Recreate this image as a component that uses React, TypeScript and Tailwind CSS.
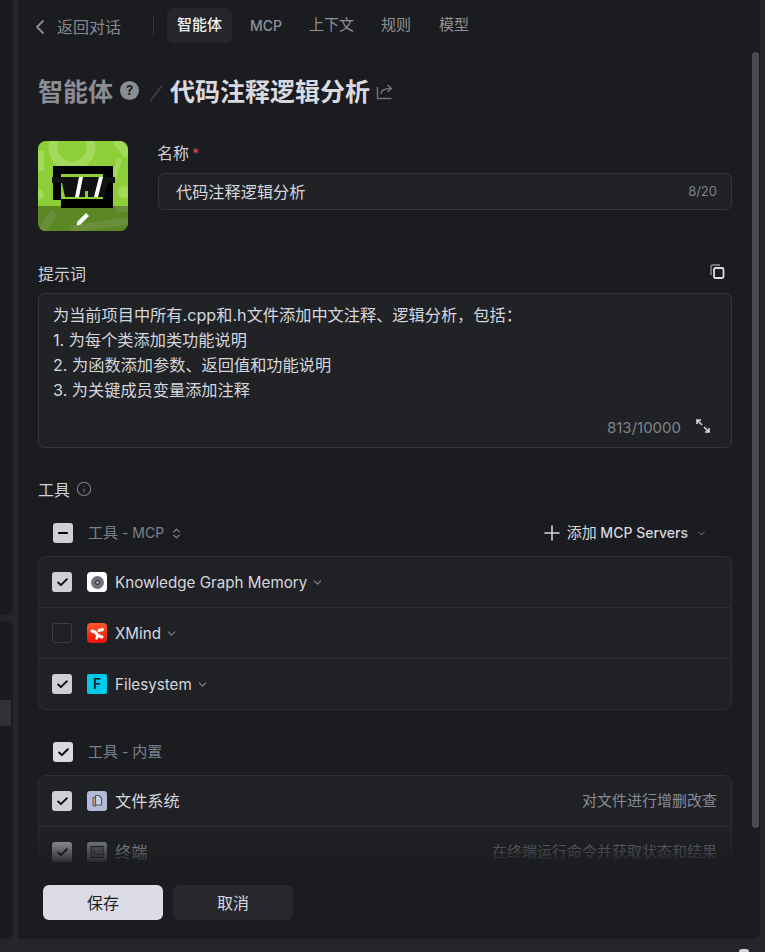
import { ChevronLeft, ChevronDown, ChevronsUpDown, Check, Minus, Plus, Info } from 'lucide-react';

const font = { fontFamily: 'Inter, "Noto Sans CJK SC", sans-serif' };

function Avatar() {
  return (
    <div className="relative w-[90px] h-[90px] rounded-lg overflow-hidden shrink-0 bg-[#8ccf38]">
      <svg width="90" height="90" viewBox="0 0 90 90" className="block">
        <circle cx="34" cy="6" r="19" fill="none" stroke="#a3da5c" strokeWidth="9" />
        <path d="M78 0 L90 14" stroke="#a3da5c" strokeWidth="8" />
        <path d="M3 10 L3 30" stroke="#a3da5c" strokeWidth="6" />
        <circle cx="1" cy="53" r="5" fill="#a3da5c" />
        <circle cx="86" cy="51" r="6" fill="#a3da5c" />
        <path d="M81 20 L76 36" stroke="#a3da5c" strokeWidth="5" strokeLinecap="round" />
        <path d="M6 88 L14 74" stroke="#a3da5c" strokeWidth="8" strokeLinecap="round" />
        <path d="M33 88 L90 80" stroke="#a3da5c" strokeWidth="7" />
        <path d="M78 65 H90 V71 H78 Z" fill="#a3da5c" />
        <path d="M15 25 H75 V67 H23 V59 H15 Z" fill="#000" />
        <path d="M23 33 H65 V58 H23 Z" fill="#8ccf38" />
        <path d="M14 36 H77 V42 H70 L66 56 H27 L24 42 H14 Z" fill="#111" />
        <path d="M41 36 H45 L41 56 H37 Z" fill="#fff" />
        <path d="M61 36 H65 L60 56 H56 Z" fill="#fff" />
        <path d="M47 56 V50 H50 V56 Z" fill="#8ccf38" />
      </svg>
      <div className="absolute left-0 right-0 bottom-0 h-[25px] bg-black/35 flex items-center justify-center">
        <svg width="14" height="14" viewBox="0 0 14 14">
          <path d="M0.500 13.500 L1.500 9.500 L10 1 L13 4 L4.500 12.500 Z" fill="#fff" />
        </svg>
      </div>
    </div>
  );
}

function Box({ on }: { on?: boolean }) {
  if (!on) return <span className="w-5 h-5 rounded-[3px] border border-[#3c3d42] shrink-0" />;
  return (
    <span className="w-5 h-5 rounded-[3px] flex items-center justify-center shrink-0 bg-[#cfd0d6]">
      <Check className="w-[13px] h-[13px] text-[#0d0d0f]" strokeWidth={3.4} />
    </span>
  );
}

function Row({ on, icon, name, desc, arrow, top, cjk }: { on?: boolean; icon: React.ReactNode; name: string; desc?: string; arrow?: boolean; top?: boolean; cjk?: boolean }) {
  return (
    <div className={`pl-[13px] pr-[14px] flex items-center ${top ? 'h-[51px] border-t border-[#2e2f34]' : 'h-[50px]'}`}>
      <Box on={on} />
      <span className="ml-[15px] w-5 h-5 shrink-0">{icon}</span>
      <span className={`ml-2 text-[#d5d7de] ${cjk ? 'text-[16.2px]' : 'text-[15.2px] pt-[2px]'}`}>{name}</span>
      {arrow && <ChevronDown className="ml-[4px] w-[13px] h-[13px] text-[#83858c]" strokeWidth={2} />}
      {desc && <span className="ml-auto text-[15px] text-[#878b96]">{desc}</span>}
    </div>
  );
}

export default function App() {
  return (
    <div className="relative w-[765px] h-[952px] overflow-hidden flex bg-[#25262a]" style={font}>
      {/* sliver of the side panel */}
      <div className="w-[13px] h-[939px] flex flex-col gap-[6px] shrink-0">
        <div className="h-[615px] bg-[#1a1b1e] rounded-br-lg" />
        <div className="h-[318px] bg-[#1a1b1e] rounded-r-lg pt-[79px]">
          <div className="h-[26px] w-[11px] bg-[#303136]" />
        </div>
      </div>

      <div className="relative ml-[5px] w-[742px] h-[939px] bg-[#1b1c1f] rounded-br-lg overflow-hidden flex flex-col">
        {/* tabs */}
        <div className="h-[51px] flex items-center shrink-0">
          <ChevronLeft className="ml-[10px] w-[24px] h-[24px] text-[#8d8f97] mt-[3px]" strokeWidth={1.8} />
          <span className="ml-[5px] text-[16px] text-[#858790] mt-[3px]">返回对话</span>
          <span className="ml-[32px] h-[20px] w-px bg-[#33343a]" />
          <div className="ml-[13px] flex items-center text-[15px] text-[#8f919a]">
            <span className="h-[35px] px-[10px] flex items-center rounded-md bg-[#25262a] text-[#eff0f3] font-medium">智能体</span>
            <span className="ml-[18px] text-[14px] font-medium">MCP</span>
            <span className="ml-[27px]">上下文</span>
            <span className="ml-[27px]">规则</span>
            <span className="ml-[28px]">模型</span>
          </div>
        </div>

        {/* title */}
        <div className="mt-[24px] ml-[20px] h-[36px] flex items-center shrink-0">
          <span className="text-[25px] font-bold text-[#8b8d96]">智能体</span>
          <span className="ml-[7px] -mt-[6px] w-[19px] h-[19px] rounded-full bg-[#8b8d96] flex items-center justify-center text-[13px] font-bold leading-none text-[#1b1c1f]">?</span>
          <span className="ml-[16px] w-[2px] h-[19px] rotate-[37deg] bg-[#3a3b40]" />
          <span className="ml-[13px] text-[25px] font-bold text-[#d9dae0]">代码注释逻辑分析</span>
          <svg width="18" height="16" viewBox="0 0 18 16" fill="none" stroke="#70727b" strokeWidth="1.5" className="ml-[6px] -mt-[2px]">
            <path d="M1.5 3v11.5h14" />
            <path d="M5 10c0-4 3-5.500 10-5.500M11.500 1l4 3.500-4 3.500" />
          </svg>
        </div>

        {/* name */}
        <div className="mt-[30px] ml-[20px] flex shrink-0">
          <Avatar />
          <div className="ml-[30px] w-[574px]">
            <div className="h-[24px] -ml-[1px] flex items-center text-[16px] text-[#cfd1d8]">
              名称<span className="ml-[3px] text-[#e5484d] text-[14px]">*</span>
            </div>
            <div className="mt-[8px] h-[37px] rounded-md border border-[#35363b] bg-[#212226] flex items-center pl-[17px] pr-[14px]">
              <span className="text-[16.2px] text-[#d5d7de] pt-[2px]">代码注释逻辑分析</span>
              <span className="ml-auto text-[13px] text-[#7c808b]">8/20</span>
            </div>
          </div>
        </div>

        {/* prompt */}
        <div className="mt-[31px] ml-[20px] mr-[28px] h-[24px] flex items-center justify-between shrink-0">
          <span className="text-[16px] text-[#cfd1d8]">提示词</span>
          <svg width="15" height="15" viewBox="0 0 15 15" fill="none" className="mr-[7px] -mt-[5px]">
            <path d="M1 11V2.500A1.500 1.500 0 0 1 2.500 1H10" stroke="#8b8d96" strokeWidth="1.4" />
            <rect x="4" y="4" width="9.500" height="10" rx="1.500" stroke="#dcdde3" strokeWidth="1.800" />
          </svg>
        </div>
        <div className="mt-[7px] ml-[20px] mr-[28px] h-[155px] rounded-md border border-[#35363b] bg-[#212226] pl-[14px] pr-[14px] pt-[9px] flex flex-col shrink-0">
          <div className="text-[16.2px] leading-[25px] text-[#d5d7de]">
            <p>为当前项目中所有.cpp和.h文件添加中文注释、逻辑分析，包括：</p>
            <p>1. 为每个类添加类功能说明</p>
            <p>2. 为函数添加参数、返回值和功能说明</p>
            <p>3. 为关键成员变量添加注释</p>
          </div>
          <div className="mt-auto mb-[8px] flex items-center justify-end">
            <span className="text-[15px] text-[#7f828c]">813/10000</span>
            <svg width="16" height="16" viewBox="0 0 16 16" fill="none" stroke="#d5d7de" strokeWidth="1.6" className="ml-[14px] mr-[6px] -mt-[4px]">
              <path d="M2 6V2h4M2 2l5 5M14 10v4h-4M14 14L9 9" />
            </svg>
          </div>
        </div>

        {/* tools */}
        <div className="mt-[30px] ml-[20px] h-[24px] flex items-center shrink-0">
          <span className="text-[16px] text-[#cfd1d8]">工具</span>
          <Info className="ml-[6px] -mt-[3px] w-[16px] h-[16px] text-[#7c7e87]" strokeWidth={1.6} />
        </div>

        <div className="mt-[13px] ml-[35px] mr-[53px] h-[36px] flex items-center shrink-0">
          <span className="w-5 h-5 rounded-[3px] bg-[#cfd0d6] flex items-center justify-center">
            <Minus className="w-[14px] h-[14px] text-black" strokeWidth={3.4} />
          </span>
          <span className="ml-[15px] text-[14px] text-[#7e818b]"><span className="text-[15px]">工具</span> - MCP</span>
          <ChevronsUpDown className="ml-[6px] w-[13px] h-[13px] text-[#8a8c94]" strokeWidth={2} />
          <Plus className="ml-auto w-[24px] h-[24px] text-[#d5d7de]" strokeWidth={1.6} />
          <span className="ml-[3px] text-[14px] font-medium text-[#d5d7de]"><span className="text-[15px] font-normal">添加</span> MCP Servers</span>
          <ChevronDown className="ml-[8px] w-[11px] h-[11px] text-[#83858c]" strokeWidth={2} />
        </div>

        <div className="mt-[5px] ml-[20px] mr-[28px] rounded-lg border border-[#2e2f34] bg-[#202125] shrink-0">
          <Row on name="Knowledge Graph Memory" arrow icon={
            <span className="w-5 h-5 rounded-[4px] bg-white flex items-center justify-center">
              <span className="w-[13px] h-[13px] rounded-full bg-[#70737d] flex items-center justify-center">
                <span className="w-[5px] h-[5px] rounded-full bg-[#a0a3ad] border border-[#23252c]" />
              </span>
            </span>
          } />
          <Row top name="XMind" arrow icon={
            <svg width="20" height="20" viewBox="0 0 20 20">
              <defs>
                <linearGradient id="xm" x1="0" y1="0" x2="0" y2="1">
                  <stop offset="0" stopColor="#fb5a2b" />
                  <stop offset="1" stopColor="#f00f0a" />
                </linearGradient>
              </defs>
              <rect width="20" height="20" rx="4" fill="url(#xm)" />
              <path d="M5 8 L8 9 L11 12.500 L15 14" stroke="#fff" strokeWidth="3" fill="none" strokeLinecap="round" />
              <path d="M15.500 6.500 L12 7.500" stroke="#fff" strokeWidth="3" fill="none" strokeLinecap="round" />
              <path d="M9.500 15.500 L10.500 13" stroke="#fff" strokeWidth="2.500" fill="none" strokeLinecap="round" />
            </svg>
          } />
          <Row top on name="Filesystem" arrow icon={
            <span className="w-5 h-5 rounded-[2px] bg-[#00cbe8] flex items-center justify-center text-[14px] font-semibold leading-none text-[#14222c]">F</span>
          } />
        </div>

        <div className="mt-[24px] ml-[35px] h-[36px] flex items-center shrink-0">
          <span className="w-5 h-5 rounded-[3px] bg-[#d9dae0] flex items-center justify-center">
            <Check className="w-[13px] h-[13px] text-black" strokeWidth={3.4} />
          </span>
          <span className="ml-[15px] text-[14px] text-[#7e818b]"><span className="text-[15px]">工具</span> - <span className="text-[15px]">内置</span></span>
        </div>

        <div className="mt-[5px] ml-[20px] mr-[28px] rounded-t-lg border border-[#2e2f34] bg-[#202125] shrink-0">
          <Row on cjk name="文件系统" desc="对文件进行增删改查" icon={
            <svg width="20" height="20" viewBox="0 0 20 20">
              <rect width="20" height="20" rx="3" fill="#b1bbd7" />
              <path d="M6 6.500H9V15H6Z" fill="#d8a35a" stroke="#4e5a78" strokeWidth="1" />
              <path d="M8.500 4.500H12L14.500 7V14H8.500Z" fill="#c9d0e2" stroke="#4e5a78" strokeWidth="1.200" />
            </svg>
          } />
          <Row top on cjk name="终端" desc="在终端运行命令并获取状态和结果" icon={
            <svg width="20" height="20" viewBox="0 0 20 20" fill="none">
              <rect width="20" height="20" rx="3" fill="#a8abb6" />
              <rect x="4" y="4.500" width="12" height="11" fill="#7d808c" stroke="#22242b" strokeWidth="1" />
              <path d="M6 8l2 2-2 2M9.500 12.500H13" stroke="#22242b" strokeWidth="1" />
            </svg>
          } />
        </div>

        {/* overlays */}
        <div className="absolute left-0 right-0 top-[826px] h-[40px] bg-gradient-to-b from-transparent to-[#1b1c1f]" />
        <div className="absolute left-0 right-0 top-[866px] bottom-0 bg-[#1b1c1f] pl-[25px] pt-[19px] flex gap-[10px]">
          <button className="w-[120px] h-[35px] rounded-md bg-[#dbdce5] text-[16px] pt-[1px] text-[#1b1c1f]">保存</button>
          <button className="w-[120px] h-[35px] rounded-md bg-[#27282c] text-[16px] pt-[1px] text-[#d5d7de]">取消</button>
        </div>
        <div className="absolute right-[1px] top-[52px] w-[7px] h-[776px] rounded-full bg-[#4a4b4e]" />
      </div>

      {/* bit of a tray icon cut off by the bottom edge */}
      <span className="absolute left-[739px] top-[949px] w-[10px] h-[6px] rounded-full bg-[#d5d7de]" />
    </div>
  );
}
